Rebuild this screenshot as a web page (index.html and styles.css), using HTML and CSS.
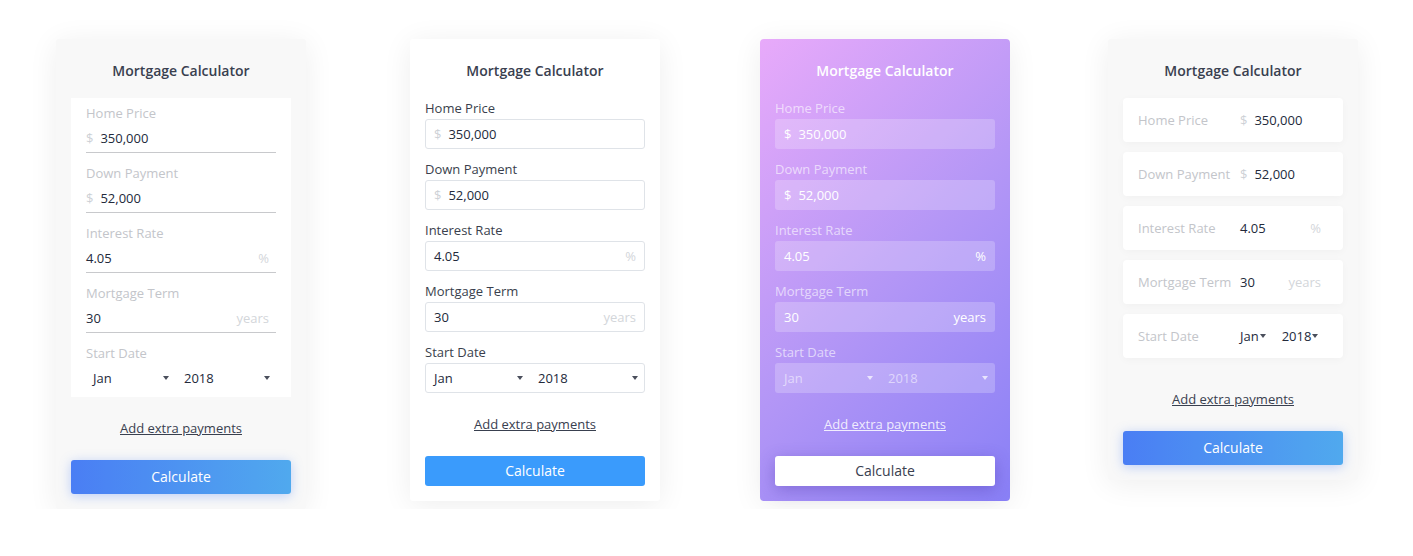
FILE: index.html
```html
<!DOCTYPE html>
<html>
	<head>
		<link rel="stylesheet" href="styles.css">
		<title>Mortgage Calculator</title>
	</head>
	<body>
		<main class="showcase">
			<section class="calc calc-underline">
				<h2 class="calc-title">Mortgage Calculator</h2>
				<div class="calc-panel">
					<div class="field">
						<label class="field-label">Home Price</label>
						<div class="field-box"><span class="affix">$</span><span class="field-value">350,000</span></div>
					</div>
					<div class="field">
						<label class="field-label">Down Payment</label>
						<div class="field-box"><span class="affix">$</span><span class="field-value">52,000</span></div>
					</div>
					<div class="field">
						<label class="field-label">Interest Rate</label>
						<div class="field-box"><span class="field-value">4.05</span><span class="suffix">%</span></div>
					</div>
					<div class="field">
						<label class="field-label">Mortgage Term</label>
						<div class="field-box"><span class="field-value">30</span><span class="suffix">years</span></div>
					</div>
					<div class="field">
						<label class="field-label">Start Date</label>
						<div class="field-box field-dates"><span class="select select-month">Jan</span><span class="select select-year">2018</span></div>
					</div>
				</div>
				<a class="calc-link">Add extra payments</a>
				<button class="calc-button">Calculate</button>
			</section>

			<section class="calc calc-outline">
				<h2 class="calc-title">Mortgage Calculator</h2>
				<div class="calc-panel">
					<div class="field">
						<label class="field-label">Home Price</label>
						<div class="field-box"><span class="affix">$</span><span class="field-value">350,000</span></div>
					</div>
					<div class="field">
						<label class="field-label">Down Payment</label>
						<div class="field-box"><span class="affix">$</span><span class="field-value">52,000</span></div>
					</div>
					<div class="field">
						<label class="field-label">Interest Rate</label>
						<div class="field-box"><span class="field-value">4.05</span><span class="suffix">%</span></div>
					</div>
					<div class="field">
						<label class="field-label">Mortgage Term</label>
						<div class="field-box"><span class="field-value">30</span><span class="suffix">years</span></div>
					</div>
					<div class="field">
						<label class="field-label">Start Date</label>
						<div class="field-box field-dates"><span class="select select-month">Jan</span><span class="select select-year">2018</span></div>
					</div>
				</div>
				<a class="calc-link">Add extra payments</a>
				<button class="calc-button">Calculate</button>
			</section>

			<section class="calc calc-outline calc-gradient">
				<h2 class="calc-title">Mortgage Calculator</h2>
				<div class="calc-panel">
					<div class="field">
						<label class="field-label">Home Price</label>
						<div class="field-box"><span class="affix">$</span><span class="field-value">350,000</span></div>
					</div>
					<div class="field">
						<label class="field-label">Down Payment</label>
						<div class="field-box"><span class="affix">$</span><span class="field-value">52,000</span></div>
					</div>
					<div class="field">
						<label class="field-label">Interest Rate</label>
						<div class="field-box"><span class="field-value">4.05</span><span class="suffix">%</span></div>
					</div>
					<div class="field">
						<label class="field-label">Mortgage Term</label>
						<div class="field-box"><span class="field-value">30</span><span class="suffix">years</span></div>
					</div>
					<div class="field">
						<label class="field-label">Start Date</label>
						<div class="field-box field-dates"><span class="select select-month">Jan</span><span class="select select-year">2018</span></div>
					</div>
				</div>
				<a class="calc-link">Add extra payments</a>
				<button class="calc-button">Calculate</button>
			</section>

			<section class="calc calc-rows">
				<h2 class="calc-title">Mortgage Calculator</h2>
				<div class="calc-panel">
					<div class="field">
						<label class="field-label">Home Price</label>
						<div class="field-box"><span class="affix">$</span><span class="field-value">350,000</span></div>
					</div>
					<div class="field">
						<label class="field-label">Down Payment</label>
						<div class="field-box"><span class="affix">$</span><span class="field-value">52,000</span></div>
					</div>
					<div class="field">
						<label class="field-label">Interest Rate</label>
						<div class="field-box"><span class="field-value">4.05</span><span class="suffix">%</span></div>
					</div>
					<div class="field">
						<label class="field-label">Mortgage Term</label>
						<div class="field-box"><span class="field-value">30</span><span class="suffix">years</span></div>
					</div>
					<div class="field">
						<label class="field-label">Start Date</label>
						<div class="field-box field-dates"><span class="select select-month">Jan</span><span class="select select-year">2018</span></div>
					</div>
				</div>
				<a class="calc-link">Add extra payments</a>
				<button class="calc-button">Calculate</button>
			</section>
		</main>
	</body>
</html>
```

FILE: styles.css
```css
body{ margin: 0; background: #fff; font-family: "Open Sans", "Liberation Sans", sans-serif; font-size: 13px; color: #232a3b; }

.showcase{ display: flex; align-items: flex-start; padding: 39px 0 0 56px; }

/* shared card */
.calc{ width: 250px; box-sizing: border-box; padding: 0 15px 15px; display: flex; flex-direction: column; border-radius: 3px; box-shadow: 0 4px 30px rgba(0,0,0,0.07); }
.calc-title{ margin: 0 0 17px; padding-top: 22px; font-size: 14px; font-weight: 600; line-height: 20px; text-align: center; color: #39404f; }
.calc-panel{ display: flex; flex-direction: column; gap: 10px; }
.field-label{ display: block; line-height: 20px; }
.field-box{ display: flex; align-items: center; line-height: 20px; box-sizing: border-box; }
.affix{ color: #cdd1d6; margin-right: 7px; }
.suffix{ margin-left: auto; color: #d3d6da; }
.select{ display: flex; align-items: center; justify-content: space-between; box-sizing: border-box; }
.select::after{ content: ""; border-left: 3.5px solid transparent; border-right: 3.5px solid transparent; border-top: 4px solid #4a4f5c; }
.select-year{ flex: 1; }
.calc-link{ align-self: center; line-height: 20px; color: #39404f; text-decoration: underline; }
.calc-button{ border: 0; border-radius: 3px; font-family: inherit; font-size: 14px; color: #fff; padding: 0 0 2px; }

/* 1: underlined fields on a white panel */
.calc-underline{ background: #f8f8f8; }
.calc-underline .calc-panel{ background: #fff; padding: 5px 15px; }
.calc-underline .field-label{ color: #c3c5ca; }
.calc-underline .field-box{ padding: 5px 7px 4px 0; border-bottom: 1px solid #c8c9cc; }
.calc-underline .field-dates{ padding: 5px 0 4px; border-bottom: 0; }
.calc-underline .select-month{ flex: 0 0 91px; padding: 0 8px 0 7px; }
.calc-underline .select-year{ padding: 0 6px 0 7px; }
.calc-underline .calc-link{ margin-top: 21px; }
.calc-underline .calc-button{ margin-top: 22px; height: 34px; }

/* 2: outlined inputs */
.calc-outline{ background: #fff; margin-left: 104px; }
.calc-outline .field-label{ color: #3a3f4d; }
.calc-outline .field-box{ margin-top: 1px; height: 30px; border: 1px solid #dfe3e8; border-radius: 3px; padding: 0 8px; }
.calc-outline .field-dates{ padding: 0; }
.calc-outline .select-month{ flex: 0 0 104px; padding: 0 7px 0 8px; }
.calc-outline .select-year{ padding: 0 6px 0 8px; }
.calc-outline .calc-link{ margin-top: 21px; }
.calc-outline .calc-button{ margin-top: 22px; height: 30px; background: #3a9bfc; }

/* 3: gradient card */
.calc-gradient{ margin-left: 100px; border-radius: 4px; background: linear-gradient(135deg, #e8aafa 0%, #b597f6 50%, #8980f6 100%); }
.calc-gradient .calc-title{ color: #fff; }
.calc-gradient .field-label{ color: rgba(255,255,255,0.62); }
.calc-gradient .field-box{ border-color: transparent; background: rgba(255,255,255,0.22); color: #fff; }
.calc-gradient .affix, .calc-gradient .suffix{ color: #fff; }
.calc-gradient .select{ color: rgba(255,255,255,0.55); }
.calc-gradient .select::after{ border-top-color: rgba(255,255,255,0.7); }
.calc-gradient .calc-link{ color: rgba(255,255,255,0.85); }
.calc-gradient .calc-button{ background: #fff; color: #39404f; box-shadow: 0 4px 16px rgba(70,50,160,0.35); }

/* 4: label and value on one row */
.calc-rows{ background: #f8f8f8; margin-left: 98px; }
.calc-rows .field{ display: flex; align-items: center; height: 44px; padding: 0 22px 0 15px; background: #fff; border-radius: 4px; box-shadow: 0 2px 8px rgba(0,0,0,0.03); }
.calc-rows .field-label{ flex: 0 0 102px; color: #c3c5ca; }
.calc-rows .field-box{ flex: 0 0 81px; }
.calc-rows .select{ justify-content: flex-start; gap: 1px; flex: none; }
.calc-rows .select-month{ margin-right: 16px; }
.calc-rows .calc-link{ margin-top: 31px; }
.calc-rows .calc-button{ margin-top: 22px; height: 34px; }

.calc-underline .calc-button, .calc-rows .calc-button{ background: linear-gradient(90deg, #4a7ef4, #50a9ee); box-shadow: 0 2px 12px rgba(74,126,244,0.35); }
```
